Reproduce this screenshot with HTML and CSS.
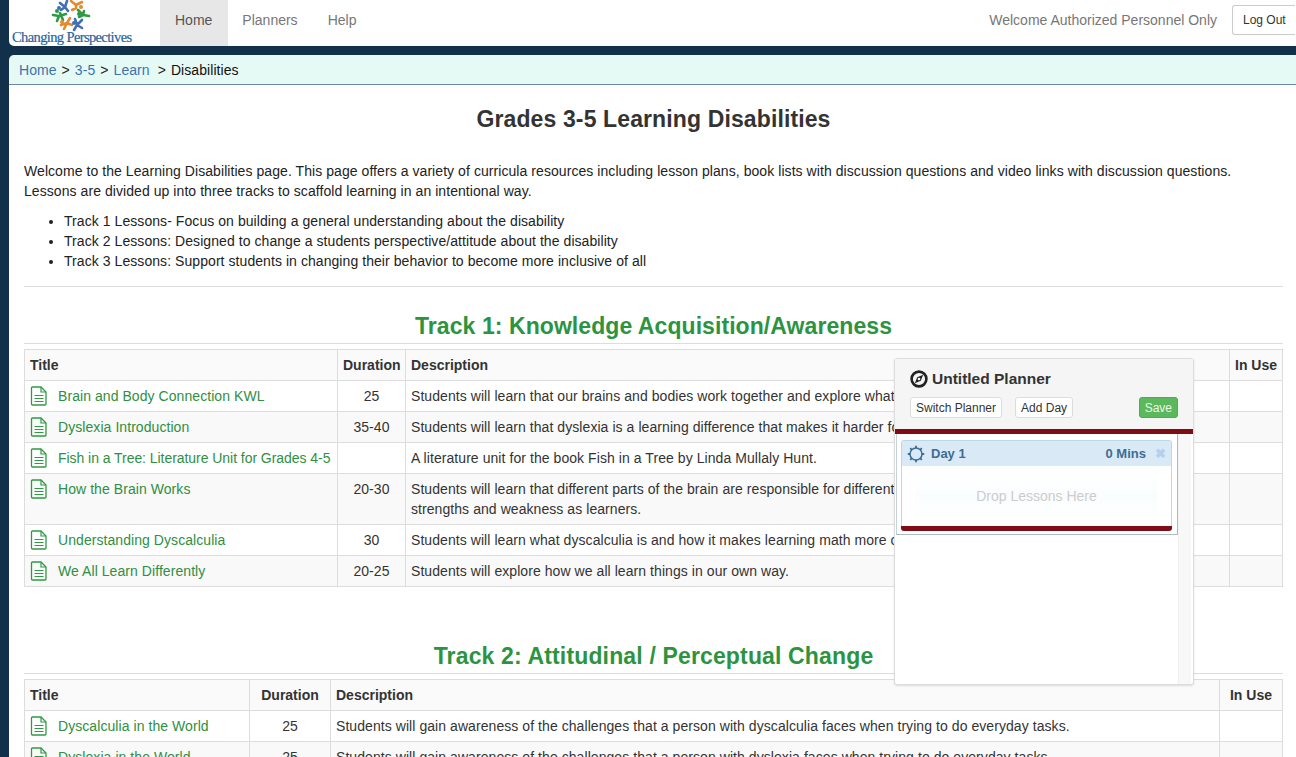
FILE: index.html
```html
<!DOCTYPE html>
<html lang="en">
<head>
<meta charset="utf-8">
<title>Grades 3-5 Learning Disabilities</title>
<link rel="stylesheet" href="styles.css">
</head>
<body>
<nav class="navbar">
  <a class="brand" href="#">
    <svg class="logo-mark" viewBox="0 0 40 32" width="40" height="32" aria-hidden="true">
      <g fill="none" stroke-width="2.6" stroke-linecap="round" stroke-linejoin="round">
        <path d="M9 3l5 4 3 4M16 1l-2 6-4 3" stroke="#3f6fb5"/>
        <path d="M20 1l5 4 6-3M25 5l0 3-4 2" stroke="#e58a2e"/>
        <path d="M2 15l6 1 7-2M8 16l-2 5M9 13l3 7" stroke="#2f9a44"/>
        <path d="M27 10l5 5 6 1M32 15l-4 2M33 11l-1 4" stroke="#2f9a44"/>
        <path d="M10 25l6-2 5 2M16 23l-3 6M16 23l3-5" stroke="#e58a2e"/>
        <path d="M24 19l2 6-3 5M26 25l5-5M26 25l5 3" stroke="#3f6fb5"/>
      </g>
      <circle cx="8" cy="8" r="2" fill="#3f6fb5"/>
      <circle cx="30" cy="7" r="2" fill="#e58a2e"/>
      <circle cx="6" cy="11" r="2" fill="#2f9a44"/>
      <circle cx="28" cy="14" r="2" fill="#2f9a44"/>
      <circle cx="11" cy="22" r="2" fill="#e58a2e"/>
      <circle cx="23" cy="23" r="2" fill="#3f6fb5"/>
    </svg>
    <span class="brand-text">Changing Perspectives</span>
  </a>
  <ul class="nav-links">
    <li class="active"><a href="#">Home</a></li>
    <li><a href="#">Planners</a></li>
    <li><a href="#">Help</a></li>
  </ul>
  <span class="welcome">Welcome Authorized Personnel Only</span>
  <button class="logout" type="button">Log Out</button>
</nav>

<div class="breadcrumb">
  <a href="#">Home</a><span class="sep">&gt;</span><a href="#">3-5</a><span class="sep">&gt;</span><a href="#">Learn</a><span class="sep sep-wide">&gt;</span><span class="current">Disabilities</span>
</div>

<main class="content">
  <h1 class="page-title">Grades 3-5 Learning Disabilities</h1>
  <p class="intro">Welcome to the Learning Disabilities page. This page offers a variety of curricula resources including lesson plans, book lists with discussion questions and video links with discussion questions. Lessons are divided up into three tracks to scaffold learning in an intentional way.</p>
  <ul class="tracks">
    <li>Track 1 Lessons- Focus on building a general understanding about the disability</li>
    <li>Track 2 Lessons: Designed to change a students perspective/attitude about the disability</li>
    <li>Track 3 Lessons: Support students in changing their behavior to become more inclusive of all</li>
  </ul>
  <hr class="rule">

  <h2 class="track-title">Track 1: Knowledge Acquisition/Awareness</h2>
  <table class="lessons lessons-one">
    <thead><tr><th class="c-title">Title</th><th class="c-dur">Duration</th><th class="c-desc">Description</th><th class="c-use">In Use</th></tr></thead>
    <tbody>
      <tr><td><a class="lesson" href="#"><svg class="doc" viewBox="0 0 18 20"><use href="#doc-icon"/></svg>Brain and Body Connection KWL</a></td><td class="mid">25</td><td>Students will learn that our brains and bodies work together and explore what each part does.</td><td></td></tr>
      <tr><td><a class="lesson" href="#"><svg class="doc" viewBox="0 0 18 20"><use href="#doc-icon"/></svg>Dyslexia Introduction</a></td><td class="mid">35-40</td><td>Students will learn that dyslexia is a learning difference that makes it harder for some to read.</td><td></td></tr>
      <tr><td><a class="lesson lesson-tight" href="#"><svg class="doc" viewBox="0 0 18 20"><use href="#doc-icon"/></svg>Fish in a Tree: Literature Unit for Grades 4-5</a></td><td class="mid"></td><td>A literature unit for the book Fish in a Tree by Linda Mullaly Hunt.</td><td></td></tr>
      <tr><td><a class="lesson" href="#"><svg class="doc" viewBox="0 0 18 20"><use href="#doc-icon"/></svg>How the Brain Works</a></td><td class="mid">20-30</td><td>Students will learn that different parts of the brain are responsible for different functions and<br>strengths and weakness as learners.</td><td></td></tr>
      <tr><td><a class="lesson" href="#"><svg class="doc" viewBox="0 0 18 20"><use href="#doc-icon"/></svg>Understanding Dyscalculia</a></td><td class="mid">30</td><td>Students will learn what dyscalculia is and how it makes learning math more challenging.</td><td></td></tr>
      <tr><td><a class="lesson" href="#"><svg class="doc" viewBox="0 0 18 20"><use href="#doc-icon"/></svg>We All Learn Differently</a></td><td class="mid">20-25</td><td>Students will explore how we all learn things in our own way.</td><td></td></tr>
    </tbody>
  </table>

  <h2 class="track-title track-two">Track 2: Attitudinal / Perceptual Change</h2>
  <table class="lessons lessons-two">
    <thead><tr><th class="c-title">Title</th><th class="c-dur">Duration</th><th class="c-desc">Description</th><th class="c-use">In Use</th></tr></thead>
    <tbody>
      <tr><td><a class="lesson" href="#"><svg class="doc" viewBox="0 0 18 20"><use href="#doc-icon"/></svg>Dyscalculia in the World</a></td><td class="mid">25</td><td>Students will gain awareness of the challenges that a person with dyscalculia faces when trying to do everyday tasks.</td><td></td></tr>
      <tr><td><a class="lesson" href="#"><svg class="doc" viewBox="0 0 18 20"><use href="#doc-icon"/></svg>Dyslexia in the World</a></td><td class="mid">25</td><td>Students will gain awareness of the challenges that a person with dyslexia faces when trying to do everyday tasks.</td><td></td></tr>
    </tbody>
  </table>
</main>

<aside class="planner">
  <div class="planner-head">
    <h3 class="planner-title">
      <svg class="compass" viewBox="0 0 18 18" width="18" height="18" aria-hidden="true">
        <circle cx="9" cy="9" r="7.4" fill="none" stroke="#222" stroke-width="2.6"/>
        <path d="M13.2 4.8L10.8 10.8 4.8 13.2 7.2 7.2Z" fill="#222"/>
        <circle cx="9" cy="9" r="1.3" fill="#f5f5f5"/>
      </svg>
      Untitled Planner
    </h3>
    <div class="planner-actions">
      <button class="btn-small" type="button">Switch Planner</button>
      <button class="btn-small" type="button">Add Day</button>
      <button class="btn-save" type="button">Save</button>
    </div>
  </div>
  <div class="planner-body">
    <div class="planner-main">
      <div class="day-box">
        <div class="day">
          <div class="day-head">
            <svg class="gear" viewBox="0 0 18 18" width="18" height="18" aria-hidden="true">
              <circle cx="9" cy="9" r="6" fill="none" stroke="#3d6d92" stroke-width="1.5"/>
              <path d="M9 0.8v2.4M9 14.8v2.4M0.8 9h2.4M14.8 9h2.4M3.2 3.2l1.7 1.7M13.1 13.1l1.7 1.7M3.2 14.8l1.7-1.7M13.1 4.9l1.7-1.7" stroke="#3d6d92" stroke-width="1.8"/>
            </svg>
            <span class="day-name">Day 1</span>
            <span class="day-mins">0 Mins</span>
            <span class="day-close">&#10006;</span>
          </div>
          <div class="drop-zone">Drop Lessons Here</div>
          <div class="day-foot"></div>
        </div>
      </div>
    </div>
    <div class="planner-scroll"></div>
  </div>
</aside>

<svg class="defs" width="0" height="0" aria-hidden="true">
  <symbol id="doc-icon" viewBox="0 0 18 20">
    <path d="M2.5 1h8.5l5 5v12a1 1 0 0 1-1 1H2.5a1 1 0 0 1-1-1V2a1 1 0 0 1 1-1Z" fill="none" stroke="#2f9a44" stroke-width="1.3"/>
    <path d="M11 1v5h5M4.5 9.5h9M4.5 12.5h9M4.5 15.5h9" fill="none" stroke="#2f9a44" stroke-width="1.2"/>
  </symbol>
</svg>
</body>
</html>
```

FILE: styles.css
```css
* { box-sizing: border-box; }
html, body { height: 100%; }
body {
  margin: 0;
  padding-left: 9px;
  background: #12304a;
  color: #333;
  font: 14px/20px "Liberation Sans", Arial, sans-serif;
  letter-spacing: .065px;
  overflow: hidden;
  position: relative;
}
a { text-decoration: none; }

.navbar {
  display: flex;
  align-items: center;
  height: 46px;
  background: #fff;
  border-bottom-left-radius: 5px;
  letter-spacing: 0;
}
.brand {
  width: 151px;
  height: 46px;
  display: flex;
  flex-direction: column;
  overflow: hidden;
}
.logo-mark { flex: none; margin-left: 42px; }
.brand-text {
  font: 14.5px/14px "Liberation Serif", serif;
  font-weight: 400;
  color: #27649f;
  margin: -2px 0 0 3px;
  white-space: nowrap;
  letter-spacing: -.62px;
  -webkit-text-stroke: .2px #27649f;
}
.nav-links {
  display: flex;
  list-style: none;
  margin: 0;
  padding: 0;
  height: 46px;
}
.nav-links li a {
  display: block;
  padding: 10px 15px;
  height: 46px;
  line-height: 20px;
  color: #777;
}
.nav-links li.active a { background: #e7e7e7; color: #555; padding-right: 16px; }
.nav-links li.active + li a { padding-left: 14px; }
.welcome { margin-left: auto; color: #777; margin-right: 15px; margin-bottom: 6px; }
.logout {
  width: 63px;
  height: 30px;
  margin-right: 1px;
  margin-bottom: 6px;
  padding: 0;
  background: #fff;
  border: 1px solid #ccc;
  border-radius: 3px 0 0 3px;
  border-right: 0;
  font: 12px/18px "Liberation Sans", Arial, sans-serif;
  color: #333;
  text-align: left;
  text-indent: 10px;
}

.breadcrumb {
  margin-top: 9px;
  height: 30px;
  padding: 5px 10px;
  background: #e6faf5;
  border-bottom: 1px solid #6d88ad;
  border-top-left-radius: 5px;
  color: #222;
}
.breadcrumb a { color: #3a73b0; }
.sep { margin: 0 5px; }
.sep-wide { margin: 0 5px 0 8px; }
.current { color: #111; }

.content {
  background: #fff;
  padding: 0 13px 0 15px;
  height: 672px;
  overflow: hidden;
}
.page-title {
  margin: 0;
  padding-top: 21px;
  font-size: 23px;
  line-height: 26px;
  font-weight: 700;
  letter-spacing: .12px;
  text-align: center;
  color: #333;
}
.intro { margin: 29px 0 0; color: #222; }
.tracks { margin: 10px 0 0; padding-left: 40px; color: #222; }
.rule { margin: 15px 0 0; border: 0; border-top: 1px solid #ddd; }
.track-title {
  margin: 25px 0 0;
  padding-bottom: 3px;
  border-bottom: 1px solid #ddd;
  font-size: 23px;
  line-height: 28px;
  font-weight: 700;
  letter-spacing: .07px;
  text-align: center;
  color: #2c9440;
}
.track-two { margin-top: 55px; letter-spacing: .15px; }

.lessons {
  width: 100%;
  margin-top: 5px;
  border-collapse: collapse;
  table-layout: fixed;
  border: 1px solid #ddd;
}
.lessons th, .lessons td {
  border: 1px solid #ddd;
  padding: 5px;
  vertical-align: top;
  font-size: 14px;
  line-height: 20px;
  color: #333;
}
.lessons th { text-align: left; background: #fafafa; font-weight: 700; letter-spacing: 0; }
.lessons .c-dur, .lessons .c-use { text-align: center; }
.lessons td.mid { text-align: center; }
.lessons tbody tr:nth-child(even) td { background: #f9f9f9; }
.lessons-one .c-title { width: 313px; }
.lessons-one .c-dur { width: 68px; }
.lessons-one .c-use { width: 53px; }
.lessons-two .c-title { width: 225px; }
.lessons-two .c-dur { width: 81px; }
.lessons-two .c-use { width: 63px; }
.lessons td a.lesson { color: #2f8f42; display: flex; align-items: flex-start; white-space: nowrap; }
.lessons td a.lesson-tight { letter-spacing: -.05px; }
.doc { flex: none; width: 18px; height: 20px; margin-right: 10px; }
.defs { position: absolute; }

.planner {
  position: absolute;
  left: 894px;
  top: 358px;
  width: 300px;
  height: 327px;
  background: #fff;
  border: 1px solid #ddd;
  border-radius: 3px;
  box-shadow: 0 1px 2px rgba(0,0,0,.12);
  display: flex;
  flex-direction: column;
  letter-spacing: 0;
}
.planner-head {
  height: 70px;
  flex: none;
  background: #f5f5f5;
  padding: 9px 15px 0;
}
.planner-title {
  display: flex;
  align-items: center;
  gap: 4px;
  margin: 0;
  font-size: 15.5px;
  line-height: 22px;
  font-weight: 700;
  color: #333;
}
.planner-actions {
  display: flex;
  margin-top: 7px;
  align-items: center;
}
.btn-small {
  height: 21px;
  padding: 0 5px;
  background: #fff;
  border: 1px solid #ddd;
  border-radius: 3px;
  font: 12px/18px "Liberation Sans", Arial, sans-serif;
  color: #333;
}
.btn-small + .btn-small { margin-left: 13px; }
.btn-save {
  margin-left: auto;
  height: 21px;
  padding: 0 5px;
  background: #5cb85c;
  border: 1px solid #4cae4c;
  border-radius: 3px;
  font: 12px/18px "Liberation Sans", Arial, sans-serif;
  color: #e9f6e9;
}
.planner-body {
  flex: 1;
  display: flex;
  border-top: 5px solid #7f0d16;
  min-height: 0;
}
.planner-main { flex: 1; }
.planner-scroll { width: 13px; background: #f8f8f8; border-left: 1px solid #f0f0f0; margin-right: 2px; }
.day-box {
  height: 101px;
  padding: 6px 5px 5px 4px;
  border-right: 1px solid #a9bcc2;
  border-bottom: 1px solid #a9bcc2;
  border-left: 1px solid #c5d3d6;
  margin-left: 1px;
}
.day {
  height: 89px;
  border: 1px solid #bcd8e8;
  border-bottom: 0;
  border-radius: 3px;
  display: flex;
  flex-direction: column;
}
.day-head {
  height: 25px;
  flex: none;
  display: flex;
  align-items: center;
  padding: 0 5px;
  background: #d9e9f6;
  color: #3d6d92;
  font-size: 13px;
  font-weight: 700;
}
.gear { flex: none; margin-right: 6px; }
.day-mins { margin-left: auto; }
.day-close { margin-left: 9px; font-size: 13px; color: #b6cfec; width: 11px; }
.drop-zone {
  flex: 1;
  margin: 0 13px;
  text-align: center;
  line-height: 60px;
  color: #ccc;
  background: linear-gradient(#fff, #fafdfe 50%, #fff);
}
.day-foot {
  height: 5px;
  flex: none;
  margin: 0 -1px;
  background: #7f0d16;
  border-radius: 0 0 3px 3px;
}
```
